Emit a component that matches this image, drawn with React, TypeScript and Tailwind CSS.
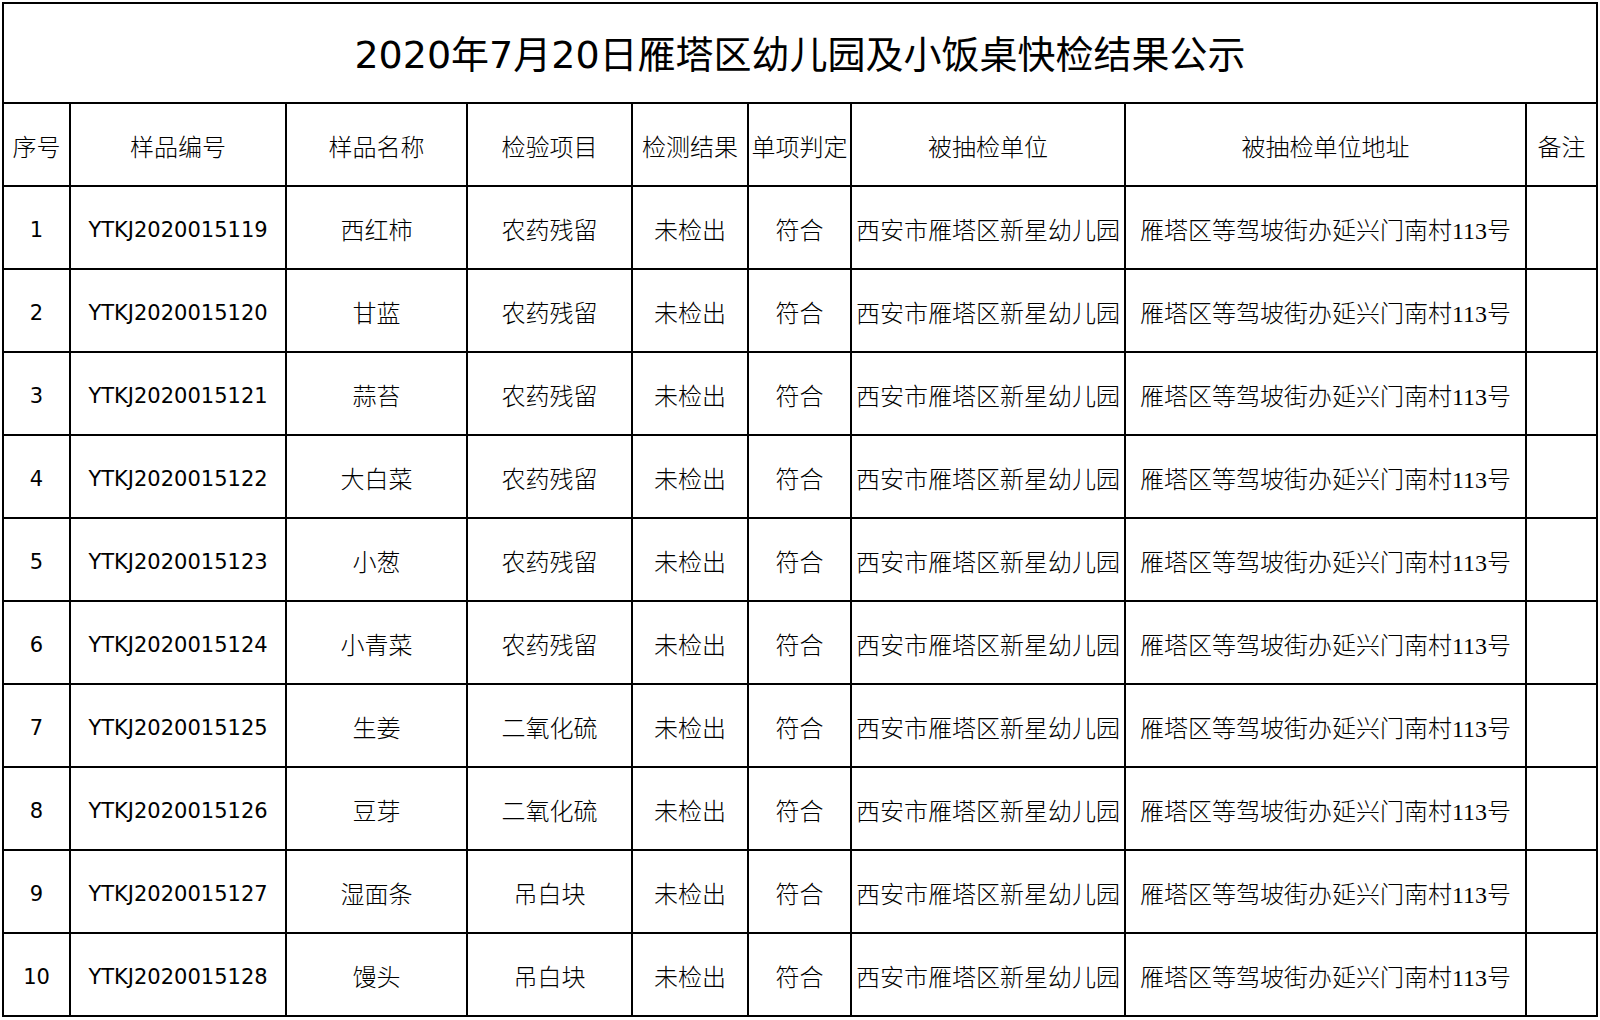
const rows = [
  { id: 'YTKJ2020015119', name: '西红柿', item: '农药残留' },
  { id: 'YTKJ2020015120', name: '甘蓝', item: '农药残留' },
  { id: 'YTKJ2020015121', name: '蒜苔', item: '农药残留' },
  { id: 'YTKJ2020015122', name: '大白菜', item: '农药残留' },
  { id: 'YTKJ2020015123', name: '小葱', item: '农药残留' },
  { id: 'YTKJ2020015124', name: '小青菜', item: '农药残留' },
  { id: 'YTKJ2020015125', name: '生姜', item: '二氧化硫' },
  { id: 'YTKJ2020015126', name: '豆芽', item: '二氧化硫' },
  { id: 'YTKJ2020015127', name: '湿面条', item: '吊白块' },
  { id: 'YTKJ2020015128', name: '馒头', item: '吊白块' },
];

const headers = ['序号', '样品编号', '样品名称', '检验项目', '检测结果', '单项判定', '被抽检单位', '被抽检单位地址', '备注'];

const cjk = "font-['Liberation_Serif','Noto_Sans_CJK_SC',serif] text-[24px] font-light pt-[6px]";
const latin = "font-['DejaVu_Sans','Noto_Sans_CJK_SC',sans-serif] text-[21px] pt-[6px]";

function Cell({ children, className = '' }: { children?: React.ReactNode; className?: string }) {
  return (
    <div className={`flex items-center justify-center whitespace-nowrap bg-white text-black ${className}`}>
      {children}
    </div>
  );
}

export default function App() {
  return (
    <div className="min-h-screen bg-white">
      <div className="m-[2px] inline-grid grid-cols-[65px_214px_179px_163px_114px_101px_272px_399px_69px] auto-rows-[81px] grid-rows-[98px] gap-[2px] bg-black p-[2px]">
        <Cell className="col-span-9 pt-[4px] font-['DejaVu_Sans','Noto_Sans_CJK_SC',sans-serif] text-[38px]">
          2020年7月20日雁塔区幼儿园及小饭桌快检结果公示
        </Cell>

        {headers.map((h) => (
          <Cell key={h} className={cjk}>
            {h}
          </Cell>
        ))}

        {rows.map((r, i) => (
          <div key={r.id} className="contents">
            <Cell className={latin}>{i + 1}</Cell>
            <Cell className={latin}>{r.id}</Cell>
            <Cell className={cjk}>{r.name}</Cell>
            <Cell className={cjk}>{r.item}</Cell>
            <Cell className={cjk}>未检出</Cell>
            <Cell className={cjk}>符合</Cell>
            <Cell className={cjk}>西安市雁塔区新星幼儿园</Cell>
            <Cell className={cjk}>雁塔区等驾坡街办延兴门南村113号</Cell>
            <Cell />
          </div>
        ))}
      </div>
    </div>
  );
}
